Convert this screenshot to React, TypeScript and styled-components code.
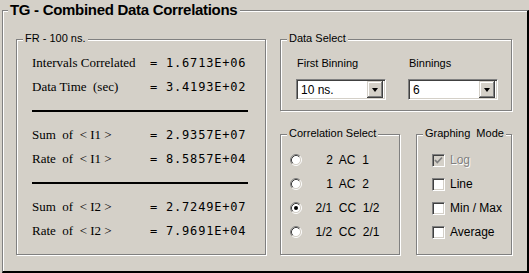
import { FC } from 'react';
import styled, { createGlobalStyle } from 'styled-components';

const Global = createGlobalStyle`
  html, body { margin: 0; padding: 0; background: #d4d0c8; }
  * { box-sizing: border-box; }
`

const Window = styled.div`
  width: 529px;
  height: 273px;
  background: #d4d0c8;
  padding: 10px 0 0 2px;
  font: 11px "Liberation Sans", Arial, sans-serif;
  color: #000;
`

const OuterGroup = styled.section`
  position: relative;
  width: 527px;
  height: 263px;
  border-top: 1px solid #808080;
  border-left: 1px solid #808080;
  border-right: 2px solid #000;
  border-bottom: 2px solid #000;
  box-shadow: inset 1px 1px 0 #fff;
  padding: 28px 0 0 13px;
  display: flex;
  gap: 14px;
`

const OuterTitle = styled.h1`
  position: absolute;
  top: -10px;
  left: 5px;
  margin: 0;
  padding: 0 3px 0 2px;
  background: #d4d0c8;
  font: bold 15px/18px "Liberation Sans", Arial, sans-serif;
  letter-spacing: -0.3px;
  white-space: nowrap;
`

const Group = styled.fieldset<{ $w: number; $h: number }>`
  position: relative;
  margin: 0;
  min-width: 0;
  width: ${p => p.$w}px;
  height: ${p => p.$h}px;
  border: 1px solid #808080;
  box-shadow: 1px 1px 0 #fff, inset 1px 1px 0 #fff;
  padding: 0;
`

const Legend = styled.div`
  position: absolute;
  top: -8px;
  left: 6px;
  padding: 0 2px;
  background: #d4d0c8;
  font: 11px/13px "Liberation Sans", Arial, sans-serif;
  white-space: nowrap;
`

const Stats = styled.div`
  padding: 11px 0 0 15px;
  display: flex;
  flex-direction: column;
`

const StatRow = styled.div`
  display: flex;
  align-items: center;
  height: 24px;
`

const StatLabel = styled.span`
  width: 118px;
  font: 13px "Liberation Serif", "Times New Roman", serif;
  white-space: pre;
`

const StatValue = styled.span`
  font: 12px "DejaVu Sans Mono", monospace;
  letter-spacing: 0.8px;
  white-space: pre;
`

const Divider = styled.div`
  height: 24px;
  width: 216px;
  display: flex;
  align-items: center;
  &::before {
    content: '';
    flex: 1;
    height: 2px;
    background: #000;
  }
`

const RightCol = styled.div`
  display: flex;
  flex-direction: column;
  gap: 23px;
`

const BottomRow = styled.div`
  display: flex;
  gap: 16px;
`

const SelectRow = styled.div`
  display: flex;
  gap: 22px;
  padding: 17px 0 0 15px;
`

const SelectCol = styled.div`
  display: flex;
  flex-direction: column;
  gap: 9px;
  span { padding-left: 1px; line-height: 13px; }
`

const Combo = styled.div`
  width: 90px;
  height: 21px;
  background: #fff;
  border-top: 1px solid #808080;
  border-left: 1px solid #808080;
  border-bottom: 1px solid #fff;
  border-right: 1px solid #fff;
  box-shadow: inset 1px 1px 0 #404040, inset -1px -1px 0 #d4d0c8;
  display: flex;
  align-items: center;
  padding: 2px 2px 2px 4px;
  font: 12px "Liberation Sans", Arial, sans-serif;
`

const ComboText = styled.div`
  flex: 1;
`

const DropButton = styled.div`
  width: 16px;
  height: 17px;
  background: #d4d0c8;
  box-shadow: inset -1px -1px 0 #404040, inset 1px 1px 0 #d4d0c8, inset -2px -2px 0 #808080, inset 2px 2px 0 #fff;
  display: flex;
  align-items: center;
  justify-content: center;
  &::after {
    content: '';
    border-left: 3.5px solid transparent;
    border-right: 3.5px solid transparent;
    border-top: 4px solid #000;
    margin: 1px 0 0 0;
  }
`

const OptionList = styled.div<{ $left: number }>`
  display: flex;
  flex-direction: column;
  padding: 13px 0 0 ${p => p.$left}px;
`

const OptionRow = styled.label`
  display: flex;
  align-items: center;
  height: 24px;
  font: 12px "Liberation Sans", Arial, sans-serif;
`

const RadioText = styled.span`
  flex: 1;
  text-align: center;
  padding-right: 6px;
  white-space: pre;
`

const CheckText = styled.span<{ $disabled?: boolean }>`
  margin-left: 5px;
  color: ${p => (p.$disabled ? '#808080' : '#000')};
  text-shadow: ${p => (p.$disabled ? '1px 1px 0 #fff' : 'none')};
`

const Box = styled.div<{ $disabled?: boolean }>`
  width: 13px;
  height: 13px;
  background: ${p => (p.$disabled ? '#d4d0c8' : '#fff')};
  border-top: 1px solid #808080;
  border-left: 1px solid #808080;
  border-bottom: 1px solid #fff;
  border-right: 1px solid #fff;
  box-shadow: inset 1px 1px 0 #404040, inset -1px -1px 0 #d4d0c8;
  display: flex;
  align-items: center;
  justify-content: center;
`

const Radio: FC<{ checked?: boolean }> = ({ checked }) => (
  <svg width="12" height="12" viewBox="0 0 12 12">
    <circle cx="6" cy="6" r="4.5" fill="#fff" />
    <path d="M2.11 9.89 A5.5 5.5 0 0 1 9.89 2.11" fill="none" stroke="#808080" />
    <path d="M9.89 2.11 A5.5 5.5 0 0 1 2.11 9.89" fill="none" stroke="#fff" />
    <path d="M2.82 9.18 A4.5 4.5 0 0 1 9.18 2.82" fill="none" stroke="#404040" />
    <path d="M9.18 2.82 A4.5 4.5 0 0 1 2.82 9.18" fill="none" stroke="#d4d0c8" />
    {checked && <circle cx="6" cy="6" r="2" fill="#000" />}
  </svg>
)

const Check: FC<{ checked?: boolean; disabled?: boolean }> = ({ checked, disabled }) => (
  <Box $disabled={disabled}>
    {checked && (
      <svg width="9" height="9" viewBox="0 0 9 9">
        <path d="M1 4 L3.3 6.5 L8 1.5" fill="none" stroke={disabled ? '#808080' : '#000'} strokeWidth="1.8" />
      </svg>
    )}
  </Box>
)

const stats1 = [
  ['Intervals Correlated', '= 1.6713E+06'],
  ['Data Time  (sec)', '= 3.4193E+02'],
]
const stats2 = [
  ['Sum  of  < I1 >', '= 2.9357E+07'],
  ['Rate  of  < I1 >', '= 8.5857E+04'],
]
const stats3 = [
  ['Sum  of  < I2 >', '= 2.7249E+07'],
  ['Rate  of  < I2 >', '= 7.9691E+04'],
]

const StatBlock: FC<{ rows: string[][] }> = ({ rows }) => (
  <>
    {rows.map(([label, value]) => (
      <StatRow key={label}>
        <StatLabel>{label}</StatLabel>
        <StatValue>{value}</StatValue>
      </StatRow>
    ))}
  </>
)

export default function App() {
  const radios = ['2  AC  1', '1  AC  2', '2/1  CC  1/2', '1/2  CC  2/1']
  const checks = [
    { label: 'Log', checked: true, disabled: true },
    { label: 'Line' },
    { label: 'Min / Max' },
    { label: 'Average' },
  ]
  return (
    <Window>
      <Global />
      <OuterGroup>
        <OuterTitle>TG - Combined Data Correlations</OuterTitle>
        <Group $w={250} $h={216}>
          <Legend>FR - 100 ns.</Legend>
          <Stats>
            <StatBlock rows={stats1} />
            <Divider />
            <StatBlock rows={stats2} />
            <Divider />
            <StatBlock rows={stats3} />
          </Stats>
        </Group>
        <RightCol>
          <Group $w={232} $h={72}>
            <Legend>Data Select</Legend>
            <SelectRow>
              <SelectCol>
                <span>First Binning</span>
                <Combo>
                  <ComboText>10 ns.</ComboText>
                  <DropButton />
                </Combo>
              </SelectCol>
              <SelectCol>
                <span>Binnings</span>
                <Combo>
                  <ComboText>6</ComboText>
                  <DropButton />
                </Combo>
              </SelectCol>
            </SelectRow>
          </Group>
          <BottomRow>
            <Group $w={120} $h={121}>
              <Legend>Correlation Select</Legend>
              <OptionList $left={9}>
                {radios.map((r, i) => (
                  <OptionRow key={r}>
                    <Radio checked={i === 2} />
                    <RadioText>{r}</RadioText>
                  </OptionRow>
                ))}
              </OptionList>
            </Group>
            <Group $w={96} $h={121}>
              <Legend>Graphing&nbsp;&nbsp;Mode</Legend>
              <OptionList $left={15}>
                {checks.map(c => (
                  <OptionRow key={c.label}>
                    <Check checked={c.checked} disabled={c.disabled} />
                    <CheckText $disabled={c.disabled}>{c.label}</CheckText>
                  </OptionRow>
                ))}
              </OptionList>
            </Group>
          </BottomRow>
        </RightCol>
      </OuterGroup>
    </Window>
  )
}
